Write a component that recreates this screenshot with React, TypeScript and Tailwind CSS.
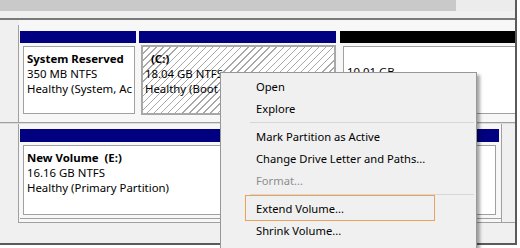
import React from 'react';

const MENU = [
  { label: 'Open' },
  { label: 'Explore' },
  { sep: true },
  { label: 'Mark Partition as Active' },
  { label: 'Change Drive Letter and Paths...' },
  { label: 'Format...', disabled: true },
  { sep: true },
  { label: 'Extend Volume...' },
  { label: 'Shrink Volume...' },
];

function ContextMenu() {
  return (
    <div className="absolute left-[220px] top-[72px] w-[257px] h-[190px] bg-[#f0f0f0] border border-[#979797] pt-[2px] text-[11.2px] shadow-[3px_3px_3px_rgba(0,0,0,0.35)]">
      {MENU.map((item, i) =>
        item.sep ? (
          <div key={i} className="h-[6px] flex items-center pl-[29px] pr-[2px]">
            <div className="h-px w-full bg-[#d7d7d7]" />
          </div>
        ) : (
          <div
            key={i}
            className={`h-[22px] flex items-center pl-[35px] ${item.disabled ? 'text-[#8d8d8d]' : 'text-black'}`}
          >
            {item.label}
          </div>
        )
      )}
    </div>
  );
}

export default function App() {
  return (
    <div className="relative w-[520px] h-[248px] bg-white overflow-hidden text-[11.4px] leading-[15px] font-['Noto_Sans',sans-serif]">
      <div className="w-[517px] h-[245px] bg-[#f0f0f0] border-r-2 border-b-2 border-[#5a5a5a] flex flex-col">
        {/* top strip */}
        <div className="h-[18px] flex">
          <div className="w-[456px] h-[11px] bg-[#c9c9c9]" />
          <div className="flex-1 h-[11px] bg-[#ececec]" />
        </div>
        <div className="h-[2px] bg-[#7a7a7a]" />

        {/* disk row 1 */}
        <div className="flex h-[103px] border-b border-[#a0a0a0]">
          <div className="w-[19px] mt-[5px] border-r border-[#a0a0a0]" />
          <div className="flex-1 flex gap-[3px] pt-[11px] pl-[1px] bg-[#f7f7f7]">
            <div className="w-[116px] flex flex-col">
              <div className="h-[12px] bg-[#000080]" />
              <div className="mt-[3px] ml-[3px] mr-[1px] h-[68px] bg-white border border-[#a0a0a0] px-[3px] pt-[4px] overflow-hidden">
                <div className="font-bold whitespace-nowrap">System Reserved</div>
                <div className="whitespace-nowrap">350 MB NTFS</div>
                <div className="whitespace-nowrap">Healthy (System, Ac</div>
              </div>
            </div>
            <div className="w-[197px] flex flex-col">
              <div className="h-[12px] bg-[#000080]" />
              <div className="mt-[2px] ml-[2px] h-[70px] border-2 border-[#a8a8a8] bg-[repeating-linear-gradient(135deg,#ffffff_0px,#ffffff_4px,#a8a8a8_4px,#a8a8a8_5px)] px-[2px] pt-[4px] overflow-hidden">
                <div className="font-bold whitespace-nowrap pl-[6px]">(C:)</div>
                <div className="whitespace-nowrap">18.04 GB NTFS</div>
                <div className="whitespace-nowrap">Healthy (Boot</div>
              </div>
            </div>
            <div className="flex-1 flex flex-col pl-[1px]">
              <div className="h-[12px] bg-black" />
              <div className="mt-[3px] ml-[3px] h-[68px] bg-white border border-r-0 border-[#a0a0a0] px-[3px] pt-[17px] overflow-hidden">
                <div className="whitespace-nowrap">10.01 GB</div>
              </div>
            </div>
          </div>
        </div>

        {/* disk row 2 */}
        <div className="flex h-[100px] border-t border-[#dcdcdc]">
          <div className="w-[19px] border-r border-[#a0a0a0]" />
          <div className="flex-1 flex flex-col">
            <div className="flex h-[99px] border-b border-[#a0a0a0]">
              <div className="w-[483px] flex flex-col pt-[5px] pl-[1px] bg-[#f7f7f7] border-r border-[#a0a0a0]">
                <div className="h-[13px] bg-[#000080] mr-[2px]" />
                <div className="mt-[3px] ml-[3px] mr-[5px] h-[70px] bg-white border border-[#a0a0a0] px-[3px] pt-[4px]">
                  <div className="font-bold whitespace-nowrap">New Volume&nbsp; (E:)</div>
                  <div className="whitespace-nowrap">16.16 GB NTFS</div>
                  <div className="whitespace-nowrap">Healthy (Primary Partition)</div>
                </div>
                <div className="mt-[3px] border-t border-[#a0a0a0]" />
              </div>
              <div className="flex-1" />
            </div>
          </div>
        </div>
      </div>

      <ContextMenu />

      {/* annotation highlight */}
      <div className="absolute left-[245px] top-[195px] w-[190px] h-[26px] border border-[#e8a25c]" />
    </div>
  );
}
